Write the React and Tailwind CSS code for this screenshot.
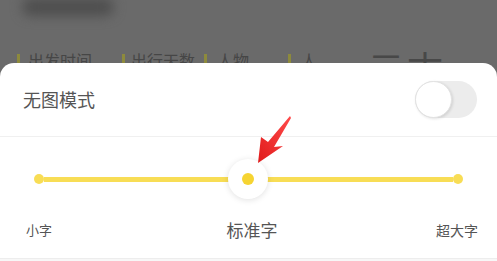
export default function App() {
    const cjk = { fontFamily: '"Noto Sans CJK SC", "Noto Sans", sans-serif' };

    return (
        <div className="relative h-[261px] w-[497px] overflow-hidden bg-[#6a6a6a]" style={cjk}>
            {/* dimmed page behind the sheet */}
            <div className="relative h-[63px] overflow-hidden">
                <div className="absolute left-[22px] top-[-2px] h-[18px] w-[92px] rounded-full bg-[#4e4e4e] blur-[6px]" />
                <div className="flex items-start pt-[50px] text-[16px] leading-[20px] text-[#464646]">
                    <div className="ml-[17px] mt-[4px] h-[11px] w-[3px] bg-[#8d8a3c]" />
                    <span className="ml-[8px]">出发时间</span>
                    <div className="ml-[30px] mt-[4px] h-[11px] w-[3px] bg-[#8d8a3c]" />
                    <span className="ml-[6px]">出行天数</span>
                    <div className="ml-[9px] mt-[4px] h-[11px] w-[3px] bg-[#8d8a3c]" />
                    <span className="ml-[10px]">人物</span>
                    <div className="ml-[39px] mt-[4px] h-[11px] w-[3px] bg-[#8d8a3c]" />
                    <span className="ml-[10px]">人</span>
                    <span className="ml-[52px] mt-[-1px] text-[34px] leading-[36px] text-[#484848]">三</span>
                    <span className="ml-[4px] mt-[-1px] text-[36px] leading-[36px] text-[#484848]">古</span>
                </div>
            </div>

            {/* bottom sheet */}
            <div className="rounded-t-[14px] bg-white">
                <div className="flex h-[73px] items-center justify-between pl-[23px] pr-[20px]">
                    <span className="text-[18px] text-[#555]">无图模式</span>
                    <div className="flex h-[37px] w-[62px] items-center rounded-full bg-[#ececec]">
                        <div className="h-[37px] w-[37px] rounded-full border border-[#e2e2e2] bg-white shadow-[1px_1px_3px_rgba(0,0,0,0.12)]" />
                    </div>
                </div>
                <div className="h-px bg-[#f0f0f0]" />

                <div className="relative mx-[34px] mt-[22px] flex h-[40px] items-center">
                    <div className="h-[10px] w-[10px] rounded-full bg-[#f8dd55]" />
                    <div className="h-[5px] flex-1 bg-[#f8dd55]" />
                    <div className="h-[10px] w-[10px] rounded-full bg-[#f8dd55]" />
                    <div className="absolute left-[194px] top-0 flex h-[40px] w-[40px] items-center justify-center rounded-full bg-white shadow-[0_1px_6px_rgba(0,0,0,0.12)]">
                        <div className="h-[12px] w-[12px] rounded-full bg-[#f6d432]" />
                    </div>
                </div>

                <div className="mt-[21px] flex items-center pl-[26px] pr-[19px] text-[#555]">
                    <span className="flex-1 text-[13px] leading-[20px]">小字</span>
                    <span className="text-[17px] leading-[20px]">标准字</span>
                    <span className="flex-1 text-right text-[14px] leading-[20px]">超大字</span>
                </div>
                <div className="h-[18px]" />
                <div className="h-px bg-[#ededed]" />
                <div className="h-[10px] bg-[#f7f7f7]" />
            </div>

            {/* red pointer arrow */}
            <svg className="pointer-events-none absolute left-0 top-0" width="497" height="261" viewBox="0 0 497 261">
                <defs>
                    <linearGradient id="ar" x1="0" y1="1" x2="1" y2="0">
                        <stop offset="0" stopColor="#e01b1b" />
                        <stop offset="1" stopColor="#ff4a4a" />
                    </linearGradient>
                </defs>
                <polygon
                    points="258,163 261,137 268,142 290,116 291,118 274,147 283,146"
                    fill="url(#ar)"
                />
            </svg>
        </div>
    );
}
